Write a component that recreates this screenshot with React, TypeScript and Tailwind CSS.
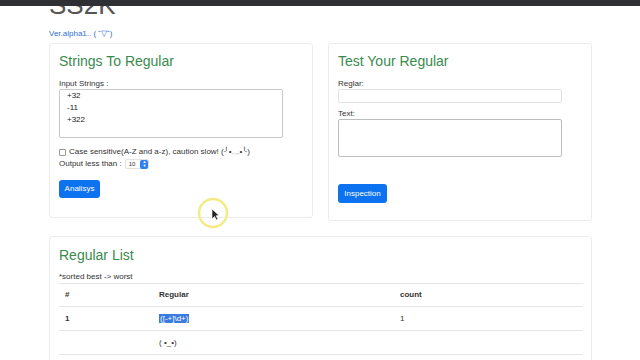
import React from 'react';

const font = { fontFamily: '"Liberation Sans", Arial, sans-serif' };

const App: React.FC = () => {
  return (
    <div className="relative w-[640px] h-[360px] overflow-hidden bg-white text-[#333]" style={font}>
      <div className="absolute top-0 left-0 right-0 h-[6px] bg-[#2e3033] z-10" />

      <div className="pl-[49px] w-[592px]">
        <div className="h-[14px] overflow-hidden">
          <div className="-mt-[8px] text-[26px] leading-none text-[#555]">SS2K</div>
        </div>
        <div className="mt-[15px] text-[8px] leading-[10px] text-[#2f6fcf]">Ver.alpha1.. ( ˘▽˘)</div>

        <div className="mt-[4px] flex gap-[15px]">
          {/* left card */}
          <div className="w-[264px] h-[175px] border border-[#ececec] rounded-[3px] px-[9px] pt-[9px]">
            <h2 className="text-[14px] leading-[17px] text-[#3a8a4d]">Strings To Regular</h2>
            <div className="mt-[9px] text-[8px] leading-[10px]">Input Strings :</div>
            <div className="w-[224px] h-[49px] border border-[#c9c9c9] rounded-[2px] pl-[7px] text-[8px] leading-[12px] text-[#222]">
              <div>+32</div>
              <div>-11</div>
              <div>+322</div>
            </div>
            <div className="mt-[9px] flex items-center gap-[3px] text-[8px] leading-[10px]">
              <span className="w-[7px] h-[7px] border border-[#999] rounded-[1px] bg-white" />
              <span>Case sensitive(A-Z and a-z), caution slow! (╯•﹏•╰)</span>
            </div>
            <div className="mt-[2px] flex items-center gap-[3px] text-[8px] leading-[10px]">
              <span>Output less than :</span>
              <span className="flex items-center h-[10px] border border-[#e2e2e2] rounded-[2px] pl-[3px] gap-[5px] text-[6px]">
                10
                <span className="w-[8px] h-[9px] rounded-[2px] bg-[#2f7ff0] flex flex-col items-center justify-center text-white text-[4px] leading-[4px]">
                  <span>▲</span>
                  <span>▼</span>
                </span>
              </span>
            </div>
            <button className="mt-[11px] w-[41px] h-[18px] rounded-[3px] bg-[#0d72f0] text-white text-[8px]">Analisys</button>
          </div>

          {/* right card */}
          <div className="w-[264px] h-[178px] border border-[#ececec] rounded-[3px] px-[9px] pt-[9px]">
            <h2 className="text-[14px] leading-[17px] text-[#3a8a4d]">Test Your Regular</h2>
            <div className="mt-[9px] text-[8px] leading-[10px]">Reglar:</div>
            <div className="w-[224px] h-[14px] border border-[#e2e2e2] rounded-[2px]" />
            <div className="mt-[6px] text-[8px] leading-[10px]">Text:</div>
            <div className="w-[224px] h-[38px] border border-[#bdbdbd] rounded-[2px]" />
            <button className="mt-[27px] w-[49px] h-[19px] rounded-[3px] bg-[#0d72f0] text-white text-[8px]">Inspection</button>
          </div>
        </div>

        {/* bottom card */}
        <div className="mt-[15px] w-[543px] h-[140px] border border-[#ececec] rounded-[3px] px-[9px] pt-[10px]">
          <h2 className="text-[14px] leading-[17px] text-[#3a8a4d]">Regular List</h2>
          <div className="mt-[8px] text-[8px] leading-[10px]">*sorted best -&gt; worst</div>
          <div className="mt-[1px] w-[524px] text-[8px]">
            <div className="flex items-center h-[24px] border-t border-b border-[#e6e6e6] font-bold">
              <span className="w-[100px] pl-[6px]">#</span>
              <span className="w-[241px]">Regular</span>
              <span>count</span>
            </div>
            <div className="flex items-center h-[24px] border-b border-[#e6e6e6]">
              <span className="w-[100px] pl-[6px] font-bold">1</span>
              <span className="w-[241px]">
                <span className="bg-[#3a7be0] text-white px-[1px]">([-+]\d+)</span>
              </span>
              <span>1</span>
            </div>
            <div className="flex items-center h-[24px] border-b border-[#e6e6e6]">
              <span className="w-[100px] pl-[6px]" />
              <span className="w-[241px]">( •_•)</span>
              <span />
            </div>
          </div>
        </div>
      </div>

      {/* cursor highlight overlay */}
      <svg className="absolute left-[196px] top-[196px]" width="36" height="36" viewBox="0 0 36 36">
        <circle cx="17" cy="17" r="14" fill="none" stroke="#f3ec86" strokeWidth="2.5" />
        <path d="M16 13 L16 23 L18.5 20.5 L20.5 24 L22 23.2 L20 19.8 L23 19.5 Z" fill="#222" stroke="#fff" strokeWidth="0.6" />
      </svg>
    </div>
  );
};

export default App;
